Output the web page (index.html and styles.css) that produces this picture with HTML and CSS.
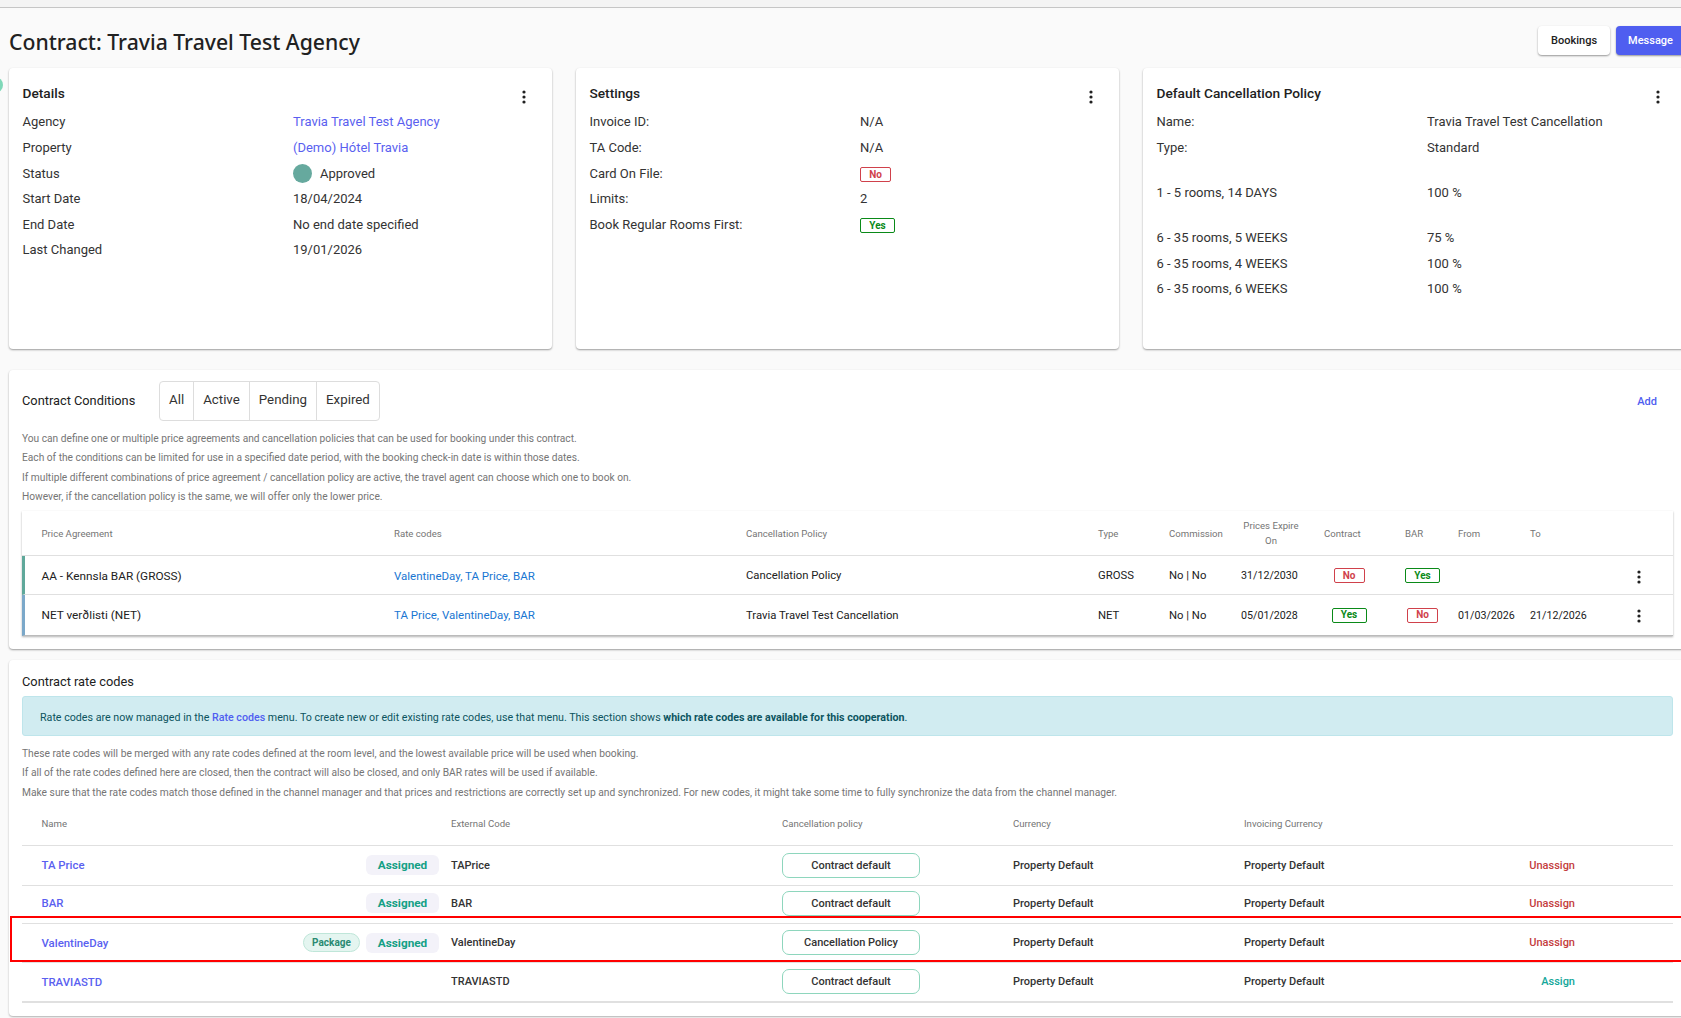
FILE: index.html
```html
<!DOCTYPE html>
<html lang="en">
<head>
<meta charset="utf-8">
<title>Contract: Travia Travel Test Agency</title>
<link rel="stylesheet" href="styles.css">
</head>
<body>
<div class="topline"></div>
<main class="page">
  <span class="edge-dot"></span>
  <header class="page-head">
    <h1>Contract: Travia Travel Test Agency</h1>
    <div class="head-actions">
      <button class="btn">Bookings</button>
      <button class="btn btn-primary">Message</button>
    </div>
  </header>

  <section class="cards">
    <article class="card">
      <h2>Details</h2>
      <svg class="kebab card-kebab" viewBox="0 0 4 14"><circle cx="2" cy="2" r="1.6"/><circle cx="2" cy="7" r="1.6"/><circle cx="2" cy="12" r="1.6"/></svg>
      <dl class="facts">
        <dt>Agency</dt><dd><a href="#">Travia Travel Test Agency</a></dd>
        <dt>Property</dt><dd><a href="#">(Demo) Hótel Travia</a></dd>
        <dt>Status</dt><dd class="status"><span class="status-dot"></span>Approved</dd>
        <dt>Start Date</dt><dd>18/04/2024</dd>
        <dt>End Date</dt><dd>No end date specified</dd>
        <dt>Last Changed</dt><dd>19/01/2026</dd>
      </dl>
    </article>
    <article class="card">
      <h2>Settings</h2>
      <svg class="kebab card-kebab" viewBox="0 0 4 14"><circle cx="2" cy="2" r="1.6"/><circle cx="2" cy="7" r="1.6"/><circle cx="2" cy="12" r="1.6"/></svg>
      <dl class="facts">
        <dt>Invoice ID:</dt><dd>N/A</dd>
        <dt>TA Code:</dt><dd>N/A</dd>
        <dt>Card On File:</dt><dd><span class="tag tag-no">No</span></dd>
        <dt>Limits:</dt><dd>2</dd>
        <dt>Book Regular Rooms First:</dt><dd><span class="tag tag-yes">Yes</span></dd>
      </dl>
    </article>
    <article class="card">
      <h2>Default Cancellation Policy</h2>
      <svg class="kebab card-kebab" viewBox="0 0 4 14"><circle cx="2" cy="2" r="1.6"/><circle cx="2" cy="7" r="1.6"/><circle cx="2" cy="12" r="1.6"/></svg>
      <dl class="facts">
        <dt>Name:</dt><dd>Travia Travel Test Cancellation</dd>
        <dt>Type:</dt><dd>Standard</dd>
        <dt class="gap-before">1 - 5 rooms, 14 DAYS</dt><dd class="gap-before">100 %</dd>
        <dt class="gap-before">6 - 35 rooms, 5 WEEKS</dt><dd class="gap-before">75 %</dd>
        <dt>6 - 35 rooms, 4 WEEKS</dt><dd>100 %</dd>
        <dt>6 - 35 rooms, 6 WEEKS</dt><dd>100 %</dd>
      </dl>
    </article>
  </section>

  <section class="panel conditions">
    <div class="panel-head">
      <h3>Contract Conditions</h3>
      <div class="segments">
        <span class="segment">All</span><span class="segment">Active</span><span class="segment">Pending</span><span class="segment">Expired</span>
      </div>
      <a class="add-link" href="#">Add</a>
    </div>
    <div class="notes">
      <p>You can define one or multiple price agreements and cancellation policies that can be used for booking under this contract.</p>
      <p>Each of the conditions can be limited for use in a specified date period, with the booking check-in date is within those dates.</p>
      <p>If multiple different combinations of price agreement / cancellation policy are active, the travel agent can choose which one to book on.</p>
      <p>However, if the cancellation policy is the same, we will offer only the lower price.</p>
    </div>
    <div class="ctable">
      <div class="crow chead">
        <span>Price Agreement</span><span>Rate codes</span><span>Cancellation Policy</span><span>Type</span><span>Commission</span><span class="expire-head">Prices Expire On</span><span>Contract</span><span>BAR</span><span>From</span><span>To</span><span></span>
      </div>
      <div class="crow cbody crow-green">
        <span class="agreement">AA - Kennsla BAR (GROSS)</span><span class="codes">ValentineDay, TA Price, BAR</span><span>Cancellation Policy</span><span>GROSS</span><span>No | No</span><span class="date">31/12/2030</span>
        <span class="slot-a"><span class="tag tag-no">No</span></span><span class="slot-b"><span class="tag tag-yes">Yes</span></span><span></span><span></span>
        <svg class="kebab row-kebab" viewBox="0 0 4 14"><circle cx="2" cy="2" r="1.6"/><circle cx="2" cy="7" r="1.6"/><circle cx="2" cy="12" r="1.6"/></svg>
      </div>
      <div class="crow cbody crow-blue">
        <span class="agreement">NET verðlisti (NET)</span><span class="codes">TA Price, ValentineDay, BAR</span><span>Travia Travel Test Cancellation</span><span>NET</span><span>No | No</span><span class="date">05/01/2028</span>
        <span class="slot-a"><span class="tag tag-yes">Yes</span></span><span class="slot-b"><span class="tag tag-no">No</span></span><span class="date">01/03/2026</span><span class="date">21/12/2026</span>
        <svg class="kebab row-kebab" viewBox="0 0 4 14"><circle cx="2" cy="2" r="1.6"/><circle cx="2" cy="7" r="1.6"/><circle cx="2" cy="12" r="1.6"/></svg>
      </div>
    </div>
  </section>

  <section class="panel rates">
    <h3 class="rates-title">Contract rate codes</h3>
    <div class="alert">Rate codes are now managed in the <a href="#">Rate codes</a> menu. To create new or edit existing rate codes, use that menu. This section shows <b>which rate codes are available for this cooperation</b>.</div>
    <div class="notes">
      <p>These rate codes will be merged with any rate codes defined at the room level, and the lowest available price will be used when booking.</p>
      <p>If all of the rate codes defined here are closed, then the contract will also be closed, and only BAR rates will be used if available.</p>
      <p>Make sure that the rate codes match those defined in the channel manager and that prices and restrictions are correctly set up and synchronized. For new codes, it might take some time to fully synchronize the data from the channel manager.</p>
    </div>
    <div class="rtable">
      <div class="rrow rhead">
        <span>Name</span><span>External Code</span><span>Cancellation policy</span><span>Currency</span><span>Invoicing Currency</span><span></span>
      </div>
      <div class="rrow rbody rh-40">
        <span class="name-cell"><a href="#">TA Price</a><span class="pill-assigned">Assigned</span></span><span>TAPrice</span><span><span class="policy">Contract default</span></span><span>Property Default</span><span>Property Default</span><a class="act act-red" href="#">Unassign</a>
      </div>
      <div class="rrow rbody rh-38">
        <span class="name-cell"><a href="#">BAR</a><span class="pill-assigned">Assigned</span></span><span>BAR</span><span><span class="policy">Contract default</span></span><span>Property Default</span><span>Property Default</span><a class="act act-red" href="#">Unassign</a>
      </div>
      <div class="rrow rbody rh-39">
        <span class="name-cell"><a href="#">ValentineDay</a><span class="pill-package">Package</span><span class="pill-assigned">Assigned</span></span><span>ValentineDay</span><span><span class="policy">Cancellation Policy</span></span><span>Property Default</span><span>Property Default</span><a class="act act-red" href="#">Unassign</a>
      </div>
      <div class="rrow rbody rh-40 rrow-last">
        <span class="name-cell"><a href="#">TRAVIASTD</a></span><span>TRAVIASTD</span><span><span class="policy">Contract default</span></span><span>Property Default</span><span>Property Default</span><a class="act act-teal" href="#">Assign</a>
      </div>
    </div>
  </section>
  <div class="highlight"></div>
</main>
</body>
</html>
```

FILE: styles.css
```css
* { box-sizing: border-box; }
html, body { margin: 0; height: 100%; overflow: hidden; }
body {
  background: #fafafa;
  color: #212121;
  font-family: Roboto, "Liberation Sans", sans-serif;
  font-size: 13px;
}
a { color: #5a5ff0; text-decoration: none; }
.topline { height: 8px; background: #f4f4f4; border-bottom: 1px solid #c6c6c6; }
.page { position: relative; width: 1686px; padding-left: 9px; }
.edge-dot {
  position: absolute; left: -13px; top: 69px;
  width: 16px; height: 16px; border-radius: 50%; background: #7fd8b8;
}
.page-head {
  height: 60px; display: flex; align-items: flex-start; justify-content: space-between;
}
.page-head h1 {
  margin: 19px 0 0; font: 500 21.2px/30px "Noto Sans", "Open Sans", sans-serif; color: #212121;
}
.head-actions { display: flex; gap: 6px; margin-top: 18px; margin-right: 1px; }
.btn {
  height: 29px; padding: 0 13px; border: 0; border-radius: 4px; background: #fff; color: #212121;
  font: 500 11px Roboto, sans-serif; box-shadow: 0 1px 2px rgba(0,0,0,.4);
}
.btn-primary { padding: 0 12px; background: #4f5ef0; color: #fff; }

.cards { display: grid; grid-template-columns: repeat(3, 543px); gap: 24px; }
.card {
  position: relative; height: 281px; padding: 16px 13.5px; background: #fff; border-radius: 4px;
  box-shadow: 0 1px 2px rgba(0,0,0,.38);
}
.card h2 { margin: 0 0 7.6px; font: 500 13.7px/18px Roboto, sans-serif; color: #212121; }
.kebab { width: 4px; height: 14px; fill: #212121; }
.card-kebab { position: absolute; right: 26px; top: 22px; }
.facts {
  margin: 0; display: grid; grid-template-columns: 270.5px 1fr; align-items: end;
  font-size: 13px; line-height: 18px; color: #333;
}
.facts dt, .facts dd { margin: 0; height: 25.6px; display: flex; align-items: center; }
.facts .gap-before { margin-top: 19.4px; }
.facts .tag { margin-top: 2px; }
.status { gap: 8px; }
.status-dot { width: 19px; height: 19px; border-radius: 50%; background: #66a99e; }
.tag {
  display: inline-flex; align-items: center; justify-content: center; height: 15px; border-radius: 2px;
  border: 1px solid; background: #fff; font: 700 10px/1 Roboto, sans-serif;
}
.tag-no { width: 31px; color: #d0414b; border-color: #d0414b; }
.tag-yes { width: 35px; color: #0a8a18; border-color: #0a8a18; }

.panel {
  background: #fff; border-radius: 4px; padding: 0 13px; box-shadow: 0 1px 2px rgba(0,0,0,.3);
}
.conditions { margin-top: 21px; height: 279px; box-shadow: 0 1px 2px rgba(0,0,0,.38); }
.panel-head { height: 51px; display: flex; align-items: center; padding-top: 11px; }
.panel-head h3 { margin: 0; width: 137px; font: 400 12.8px/18px Roboto, sans-serif; color: #212121; }
.segments { display: flex; height: 40px; border: 1px solid #ddd; border-radius: 4px; }
.segment {
  padding: 0 9px; font-size: 13.3px; line-height: 36px; color: #333; border-left: 1px solid #ddd;
}
.segment:first-child { border-left: 0; }
.add-link { margin-left: auto; margin-right: 16px; font-size: 11px; font-weight: 500; color: #4f5ef0; }
.notes { margin-top: 8px; color: #757575; font-size: 10.2px; line-height: 13px; }
.notes p { margin: 0; height: 19.3px; display: flex; align-items: center; white-space: nowrap; }

.ctable { margin-top: 5px; width: 1651px; box-shadow: 0 1px 2px rgba(0,0,0,.3); }
.crow {
  display: grid; grid-template-columns: 352.5px 352px 352px 71px 72px 83px 81px 53px 72px 106.5px 1fr;
  padding-left: 19.5px; align-items: center;
}
.chead { height: 45px; color: #757575; font-size: 9.6px; line-height: 15px; border-bottom: 1px solid #e0e0e0; }
.expire-head { width: 60px; text-align: center; }
.cbody { font-size: 11.3px; color: #212121; border-bottom: 1px solid #e0e0e0; border-left: 3px solid; padding-left: 16.5px; font-weight: 400; }
.crow-green { height: 39px; padding-top: 1px; border-left-color: #5fa89a; }
.crow-blue { height: 41px; border-left-color: #7ba8c9; border-bottom-color: #bbb; }
.agreement { font-size: 11.8px; }
.codes { color: #1976d2; font-size: 11.5px; }
.date { font-size: 10.7px; }
.row-kebab { margin-top: 2px; }
.slot-a { width: 50px; display: flex; justify-content: center; }
.slot-b { width: 35px; display: flex; justify-content: center; }

.rates { margin-top: 11px; height: 356px; padding-top: 13px; }
.rates-title { margin: 0; font: 400 12.8px/18px Roboto, sans-serif; color: #212121; }
.alert {
  margin-top: 5px; width: 1651px; height: 40px; padding: 4px 17px 0; line-height: 34px;
  background: #d1ecf1; border: 1px solid #bee5eb; border-radius: 3px; color: #0c5460; font-size: 10.68px;
}
.alert a { color: #4f5ef0; font-weight: 500; }
.alert b { font-weight: 700; }
.rates .notes { margin-top: 8px; font-size: 10.25px; }
.rtable { width: 1651px; margin-top: 0; }
.rrow {
  display: grid; grid-template-columns: 409.5px 331px 231px 231px 231px 100px; padding-left: 19.5px;
  align-items: center; border-bottom: 1px solid #e0e0e0;
}
.rhead { height: 44px; color: #757575; font-size: 9.6px; }
.rbody { font-size: 11px; color: #333; font-weight: 500; }
.rh-40 { height: 40px; }
.rh-38 { height: 38px; padding-bottom: 2px; }
.rh-39 { height: 39px; }
.rrow-last { border-bottom: 2px solid #e0e0e0; }
.name-cell { display: flex; align-items: center; gap: 6px; padding-right: 12px; }
.name-cell a { margin-right: auto; color: #5a5ff0; font-size: 11.4px; }
.pill-assigned {
  width: 73px; height: 20px; border-radius: 6px; background: #f3f2f9; color: #14a085;
  font: 700 11.8px/20px Roboto, sans-serif; text-align: center;
}
.pill-package {
  width: 57px; height: 19px; border-radius: 10px; background: #e4f5f0; border: 1px solid #bfe6d9; color: #2a8a72;
  font: 700 10px/17px Roboto, sans-serif; text-align: center;
}
.policy {
  display: block; width: 138px; height: 25px; border: 1px solid #8ed6bd; border-radius: 7px;
  text-align: center; line-height: 23px; color: #333;
}
.act { justify-self: end; font-weight: 500; }
.act-red { color: #c43d3d; }
.act-teal { color: #14a79a; }
.highlight {
  position: absolute; left: 10px; right: -10px; top: 908px; height: 46px; border: 2px solid #f00; pointer-events: none;
}
```
